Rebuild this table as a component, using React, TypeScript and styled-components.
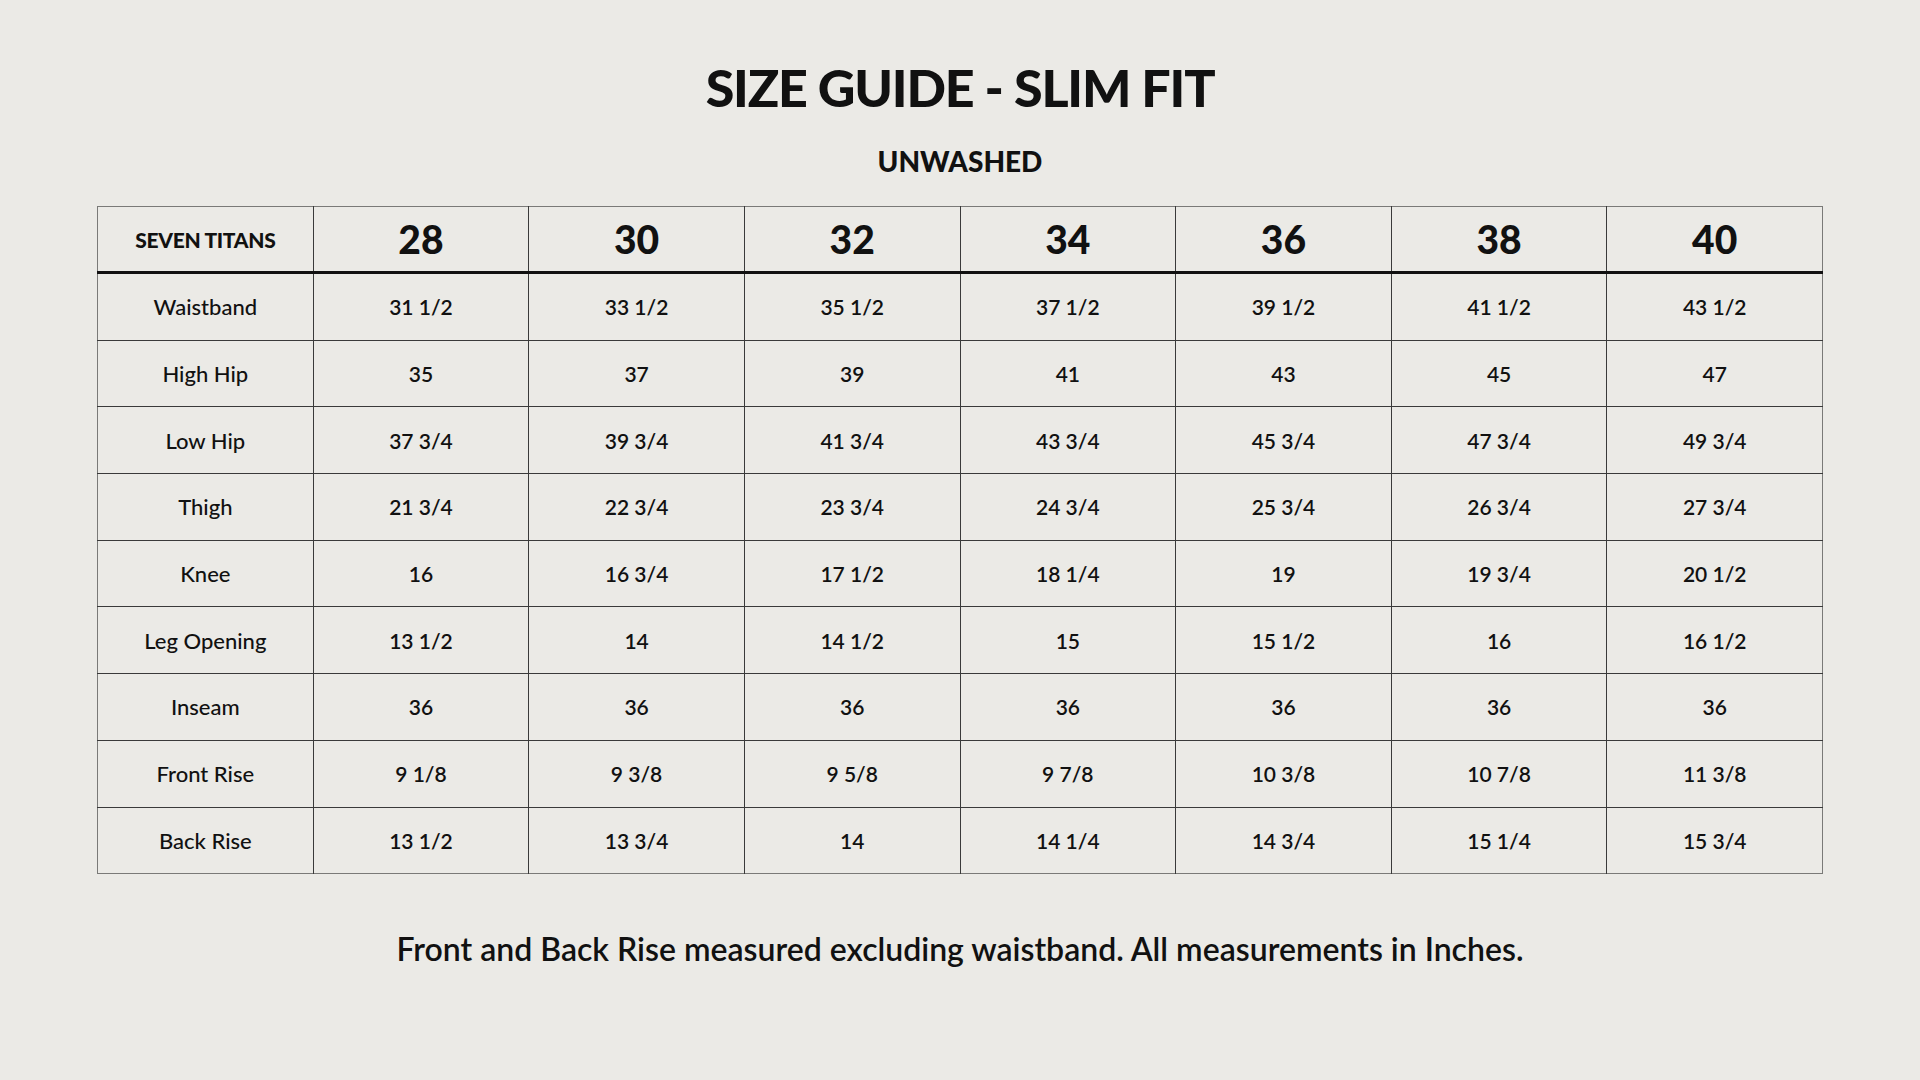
import React from 'react';
import styled, { createGlobalStyle } from 'styled-components';

const GlobalStyle = createGlobalStyle`
  html, body {
    margin: 0;
    padding: 0;
    background: #ebeae6;
  }
  body {
    font-family: Lato, "Noto Sans", sans-serif;
    color: #111;
  }
`;

const Page = styled.div`
  width: 1920px;
  height: 1080px;
  box-sizing: border-box;
  padding-top: 61px;
  display: flex;
  flex-direction: column;
  align-items: center;
  background: #ebeae6;
`;

const Title = styled.h1`
  margin: 0;
  font-size: 52px;
  line-height: 1;
  font-weight: 900;
  letter-spacing: -1.2px;
  text-transform: uppercase;
`;

const Subtitle = styled.h2`
  margin: 34px 0 0;
  font-size: 28px;
  line-height: 1;
  font-weight: 900;
  text-transform: uppercase;
`;

const Table = styled.table`
  margin-top: 31px;
  width: 1726px;
  border-collapse: collapse;
  table-layout: fixed;
  border: 1px solid #7a7a78;
`;

const HeadCell = styled.th<{ $label?: boolean }>`
  height: 64px;
  padding: 0;
  border-left: 1px solid #3a3a3a;
  border-bottom: 3px solid #111;
  text-align: center;
  font-weight: 900;
  font-size: ${p => (p.$label ? '21px' : '39px')};
  letter-spacing: ${p => (p.$label ? '-0.3px' : '0')};
  text-transform: uppercase;
  &:first-child {
    border-left: none;
  }
`;

const Cell = styled.td<{ $label?: boolean }>`
  height: 65.7px;
  padding: 0;
  border-left: 1px solid #3a3a3a;
  border-top: 1px solid #3a3a3a;
  text-align: center;
  font-size: ${p => (p.$label ? '22px' : '21px')};
  font-weight: ${p => (p.$label ? 500 : 600)};
  &:first-child {
    border-left: none;
  }
`;

const Note = styled.p`
  margin: 59px 0 0;
  font-size: 32px;
  line-height: 1;
  font-weight: 600;
`;

const sizes = ['28', '30', '32', '34', '36', '38', '40'];

const rows: [string, string[]][] = [
  ['Waistband', ['31 1/2', '33 1/2', '35 1/2', '37 1/2', '39 1/2', '41 1/2', '43 1/2']],
  ['High Hip', ['35', '37', '39', '41', '43', '45', '47']],
  ['Low Hip', ['37 3/4', '39 3/4', '41 3/4', '43 3/4', '45 3/4', '47 3/4', '49 3/4']],
  ['Thigh', ['21 3/4', '22 3/4', '23 3/4', '24 3/4', '25 3/4', '26 3/4', '27 3/4']],
  ['Knee', ['16', '16 3/4', '17 1/2', '18 1/4', '19', '19 3/4', '20 1/2']],
  ['Leg Opening', ['13 1/2', '14', '14 1/2', '15', '15 1/2', '16', '16 1/2']],
  ['Inseam', ['36', '36', '36', '36', '36', '36', '36']],
  ['Front Rise', ['9 1/8', '9 3/8', '9 5/8', '9 7/8', '10 3/8', '10 7/8', '11 3/8']],
  ['Back Rise', ['13 1/2', '13 3/4', '14', '14 1/4', '14 3/4', '15 1/4', '15 3/4']],
];

const App = () => {
  return (
    <>
      <GlobalStyle />
      <Page>
        <Title>Size Guide - Slim Fit</Title>
        <Subtitle>Unwashed</Subtitle>
        <Table>
          <thead>
            <tr>
              <HeadCell $label>Seven Titans</HeadCell>
              {sizes.map(s => (
                <HeadCell key={s}>{s}</HeadCell>
              ))}
            </tr>
          </thead>
          <tbody>
            {rows.map(([name, values]) => (
              <tr key={name}>
                <Cell $label>{name}</Cell>
                {values.map((v, i) => (
                  <Cell key={i}>{v}</Cell>
                ))}
              </tr>
            ))}
          </tbody>
        </Table>
        <Note>Front and Back Rise measured excluding waistband. All measurements in Inches.</Note>
      </Page>
    </>
  );
};

export default App;
